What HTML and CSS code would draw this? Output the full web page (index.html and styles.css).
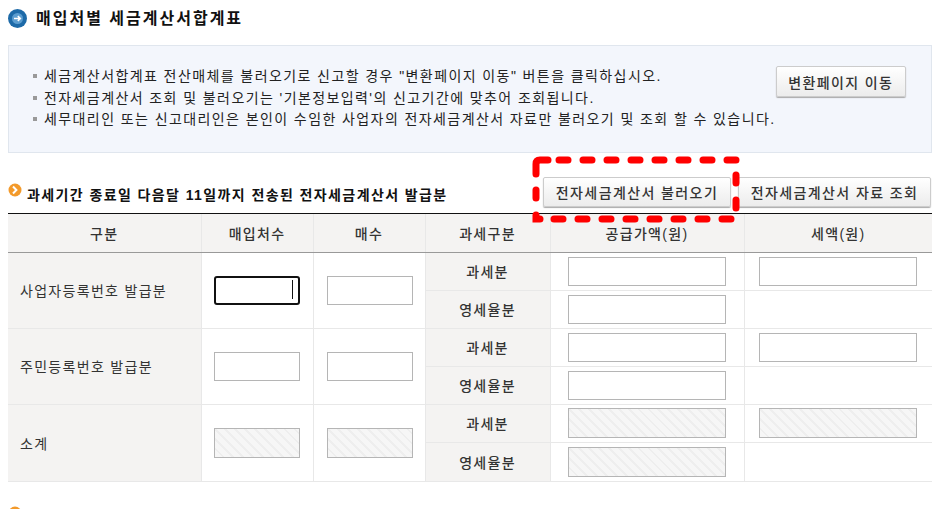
FILE: index.html
```html
<!DOCTYPE html>
<html lang="ko">
<head>
    <meta charset="UTF-8">
    <title>매입처별 세금계산서합계표</title>
    <link rel="stylesheet" href="styles.css">
</head>
<body>
    <div class="wrap">
        <h1 class="title">
            <svg class="icon-blue" width="19" height="19" viewBox="0 0 19 19">
                <circle cx="9.5" cy="9.5" r="9.5" fill="#1d6aa8"/>
                <circle cx="9.5" cy="9.5" r="5.5" fill="#5b9dd0"/>
                <path d="M6 9.5h6.5M9.8 7.2l2.5 2.3-2.5 2.3" fill="none" stroke="#fff" stroke-width="1.6"/>
            </svg>
            매입처별 세금계산서합계표
        </h1>

        <div class="notice">
            <ul class="notice-list">
                <li>세금계산서합계표 전산매체를 불러오기로 신고할 경우 "변환페이지 이동" 버튼을 클릭하십시오.</li>
                <li>전자세금계산서 조회 및 불러오기는 '기본정보입력'의 신고기간에 맞추어 조회됩니다.</li>
                <li>세무대리인 또는 신고대리인은 본인이 수임한 사업자의 전자세금계산서 자료만 불러오기 및 조회 할 수 있습니다.</li>
            </ul>
            <button class="btn btn-move">변환페이지 이동</button>
        </div>

        <div class="section-head">
            <h2 class="subtitle">
                <svg class="icon-orange" width="14" height="14" viewBox="0 0 14 14">
                    <circle cx="7" cy="7" r="6.5" fill="#f39a2b"/>
                    <path d="M5 3.5l3.4 3.5L5 10.5" fill="none" stroke="#fff" stroke-width="2"/>
                </svg>
                과세기간 종료일 다음달 11일까지 전송된 전자세금계산서 발급분
            </h2>
            <div class="btn-group">
                <button class="btn btn-load">전자세금계산서 불러오기</button>
                <button class="btn btn-search">전자세금계산서 자료 조회</button>
            </div>
        </div>

        <table class="sum-table">
            <colgroup>
                <col class="c1"><col class="c2"><col class="c3"><col class="c4"><col class="c5"><col class="c6">
            </colgroup>
            <thead>
                <tr>
                    <th>구분</th>
                    <th>매입처수</th>
                    <th>매수</th>
                    <th>과세구분</th>
                    <th>공급가액(원)</th>
                    <th>세액(원)</th>
                </tr>
            </thead>
            <tbody>
                <tr>
                    <td class="name" rowspan="2">사업자등록번호 발급분</td>
                    <td class="short first" rowspan="2">
                        <span class="focus-box"><input class="field field-focus" type="text"><i class="caret"></i></span>
                    </td>
                    <td class="short" rowspan="2"><input class="field" type="text"></td>
                    <td class="kind">과세분</td>
                    <td><input class="field" type="text"></td>
                    <td class="tax"><input class="field" type="text"></td>
                </tr>
                <tr>
                    <td class="kind">영세율분</td>
                    <td><input class="field" type="text"></td>
                    <td class="tax"></td>
                </tr>
                <tr>
                    <td class="name" rowspan="2">주민등록번호 발급분</td>
                    <td class="short first" rowspan="2"><input class="field" type="text"></td>
                    <td class="short" rowspan="2"><input class="field" type="text"></td>
                    <td class="kind">과세분</td>
                    <td><input class="field" type="text"></td>
                    <td class="tax"><input class="field" type="text"></td>
                </tr>
                <tr>
                    <td class="kind">영세율분</td>
                    <td><input class="field" type="text"></td>
                    <td class="tax"></td>
                </tr>
                <tr>
                    <td class="name" rowspan="2">소계</td>
                    <td class="short first" rowspan="2"><input class="field locked" type="text" disabled></td>
                    <td class="short" rowspan="2"><input class="field locked" type="text" disabled></td>
                    <td class="kind">과세분</td>
                    <td><input class="field locked" type="text" disabled></td>
                    <td class="tax"><input class="field locked" type="text" disabled></td>
                </tr>
                <tr class="last-row">
                    <td class="kind">영세율분</td>
                    <td><input class="field locked" type="text" disabled></td>
                    <td class="tax"></td>
                </tr>
            </tbody>
        </table>

        <svg class="icon-orange next-icon" width="14" height="14" viewBox="0 0 14 14">
            <circle cx="7" cy="7" r="6.5" fill="#f39a2b"/>
        </svg>

        <!-- 빨간 점선 강조 표시 -->
        <svg class="highlight" width="220" height="72" viewBox="0 0 220 72">
            <g fill="none" stroke="#f00" stroke-width="7" stroke-linecap="round">
                <path d="M4 18V8q0-4 4-4h8"/>
                <path d="M4 34v8"/>
                <path d="M4 59v4q0 0 4 0"/>
                <path d="M27 4h9M51 4h9M75 4h9M99 4h9M123 4h9M147 4h9M171 4h9M195 4h9"/>
                <path d="M22 63h9M46 63h9M70 63h9M94 63h9M118 63h9M142 63h9M166 63h9M190 63h9"/>
                <path d="M204 19v8M204 44v8"/>
            </g>
        </svg>
    </div>
</body>
</html>
```

FILE: styles.css
```css
* {
    padding: 0;
    margin: 0;
    box-sizing: border-box;
}
html {
    overflow: hidden;
}
body {
    background-color: #fff;
    font-family: "Liberation Sans", "Noto Sans CJK KR", sans-serif;
    font-size: 14px;
    color: #333;
}
.wrap {
    width: 946px;
    height: 509px;
    padding: 0 14px 0 8px;
    position: relative;
    overflow: hidden;
}
.title {
    height: 45px;
    padding-top: 8px;
    display: flex;
    align-items: flex-start;
    gap: 9px;
    font-size: 16px;
    line-height: 22px;
    font-weight: bold;
    color: #111;
    letter-spacing: 2px;
}
.icon-blue {
    margin-top: 1px;
}
.notice {
    height: 108px;
    display: flex;
    justify-content: space-between;
    align-items: flex-start;
    padding: 20px 25px 0 24px;
    background-color: #f3f6fc;
    border: 1px solid #e0e6ee;
}
.notice-list {
    list-style: none;
    color: #222;
    font-size: 14px;
    line-height: 21.5px;
    letter-spacing: 1.41px;
    white-space: nowrap;
}
.notice-list li {
    padding-left: 11px;
    position: relative;
}
.notice-list li::before {
    content: "";
    position: absolute;
    left: 0;
    top: 8px;
    width: 4px;
    height: 4px;
    background-color: #999;
}
.btn {
    height: 31px;
    font-family: inherit;
    font-size: 14px;
    font-weight: 500;
    color: #333;
    letter-spacing: 1.4px;
    background: linear-gradient(#fff, #ececec);
    border: 1px solid #ccc;
    border-radius: 2px;
    box-shadow: 0 1px 1px #aaa;
}
.btn-move {
    width: 131px;
}
.section-head {
    height: 61px;
    display: flex;
    justify-content: space-between;
    align-items: flex-start;
    border-bottom: 1px solid #111;
}
.subtitle {
    padding-top: 31px;
    display: flex;
    align-items: flex-start;
    gap: 5px;
    font-size: 14px;
    line-height: 22px;
    font-weight: bold;
    color: #111;
    letter-spacing: 1.4px;
}
.subtitle .icon-orange {
    margin-top: -1px;
}
.icon-orange {
    flex-shrink: 0;
}
.btn-group {
    display: flex;
    gap: 7px;
    padding: 24px 1px 0 0;
}
.btn-load {
    width: 188px;
    height: 30px;
}
.btn-search {
    width: 193px;
    height: 30px;
}
.sum-table {
    width: 924px;
    table-layout: fixed;
    border-collapse: collapse;
}
.c1 { width: 193px; }
.c2, .c3 { width: 112px; }
.c4 { width: 125px; }
.c5 { width: 194px; }
.c6 { width: 188px; }
.sum-table th {
    height: 38px;
    background-color: #f4f3f2;
    border-left: 1px solid #e8e8e8;
    border-bottom: 1px solid #999;
    font-size: 14px;
    font-weight: 500;
    letter-spacing: 1.3px;
}
.sum-table th:first-child {
    border-left: 0;
}
.sum-table td {
    height: 38px;
    border: 1px solid #e8e8e8;
    padding-left: 17px;
    font-size: 14px;
    letter-spacing: 1.3px;
}
.sum-table tr td:last-child {
    border-right: 0;
}
.sum-table td.name {
    padding-left: 12px;
    background-color: #f4f3f2;
    border-left: 0;
}
.sum-table td.short {
    padding-left: 13px;
}
.sum-table td.short.first {
    padding-left: 12px;
}
.sum-table td.tax {
    padding-left: 14px;
}
.sum-table td.kind {
    padding-left: 0;
    text-align: center;
    background-color: #f4f3f2;
    font-weight: 500;
}
.sum-table .last-row td {
    height: 39px;
}
.field {
    display: block;
    width: 158px;
    height: 29px;
    background-color: #fff;
    border: 1px solid #b5b5b5;
    outline: 0;
}
.short .field {
    width: 86px;
}
.field-focus {
    border: 2px solid #111;
    border-radius: 3px;
}
.focus-box {
    display: block;
    width: 86px;
    position: relative;
}
.caret {
    position: absolute;
    top: 4px;
    right: 7px;
    width: 1px;
    height: 19px;
    background-color: #111;
}
.locked {
    height: 30px;
    border-width: 1px;
    background: repeating-linear-gradient(45deg, #f6f6f6 0, #f6f6f6 5px, #eeeeee 5px, #eeeeee 7px);
}
.next-icon {
    display: block;
    margin-top: 24px;
}
.highlight {
    position: absolute;
    left: 532px;
    top: 156px;
}
```
